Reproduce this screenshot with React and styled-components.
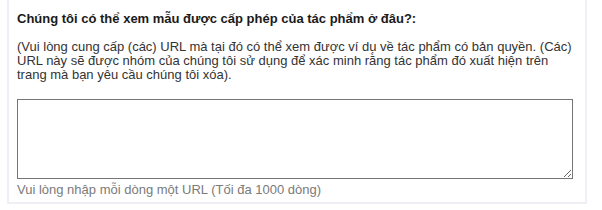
import React from "react";
import styled, { createGlobalStyle } from "styled-components";

const Global = createGlobalStyle`
  html, body { margin: 0; padding: 0; background: #ffffff; }
  body { font-family: "Liberation Sans", Arial, sans-serif; }
`;

const Card = styled.section`
  box-sizing: border-box;
  margin-left: 7px;
  width: 580px;
  padding: 11px 12px 4px 8px;
  background: #ffffff;
  border: 2px solid #eef0f6;
  border-top: none;
`;

const Title = styled.h3`
  margin: 0;
  font-size: 13px;
  line-height: 16px;
  font-weight: bold;
  color: #1a1a1a;
`;

const Hint = styled.p`
  margin: 13px 0 0;
  font-size: 13px;
  line-height: 14px;
  color: #333333;
`;

const Area = styled.textarea`
  display: block;
  box-sizing: border-box;
  margin-top: 17px;
  width: 556px;
  height: 80px;
  border: 1px solid #767676;
  border-radius: 0;
  padding: 2px;
  font-family: "Liberation Sans", Arial, sans-serif;
  font-size: 13px;
  background: #ffffff;
`;

const Note = styled.div`
  margin-top: 3px;
  font-size: 13px;
  line-height: 16px;
  color: #7a7a7a;
`;

export default function App() {
  return (
    <>
      <Global />
      <Card>
        <Title>Chúng tôi có thể xem mẫu được cấp phép của tác phẩm ở đâu?:</Title>
        <Hint>
          (Vui lòng cung cấp (các) URL mà tại đó có thể xem được ví dụ về tác phẩm có bản quyền. (Các)
          URL này sẽ được nhóm của chúng tôi sử dụng để xác minh rằng tác phẩm đó xuất hiện trên
          trang mà bạn yêu cầu chúng tôi xóa).
        </Hint>
        <Area />
        <Note>Vui lòng nhập mỗi dòng một URL (Tối đa 1000 dòng)</Note>
      </Card>
    </>
  );
}
